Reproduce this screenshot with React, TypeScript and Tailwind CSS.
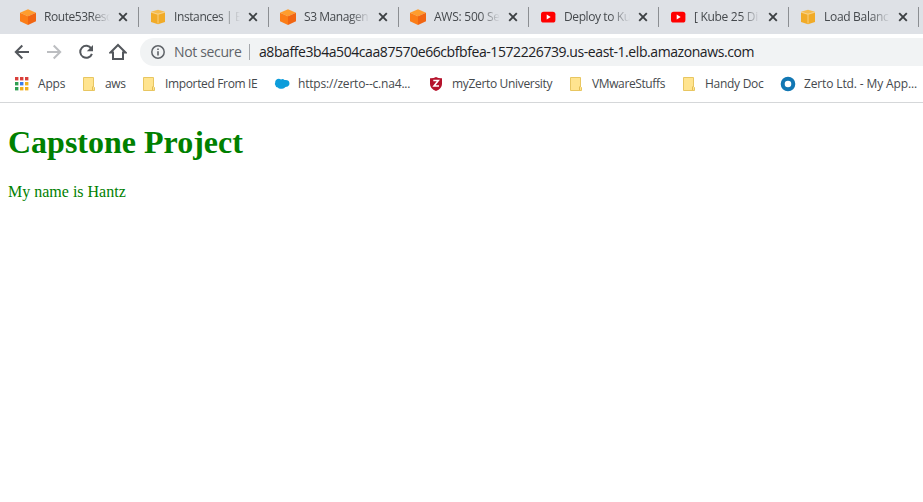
import { type ReactNode } from "react";

function Cube({ light }: { light?: boolean }) {
  return light ? (
    <svg width="16" height="16" viewBox="0 0 16 16" className="shrink-0">
      <path d="M1 3 8 5 15 3V12.900L8 15.200 1 12.900Z" fill="#f1ab28" />
      <path d="M1 2.800 8 .7 15 2.800 8 5Z" fill="#f6bb4c" />
      <path d="M1 3.200 8 5.300 15 3.200M8 5.300V14.500" fill="none" stroke="#fad58b" strokeWidth=".9" />
    </svg>
  ) : (
    <svg width="16" height="16" viewBox="0 0 16 16" className="shrink-0">
      <path d="M8 .3 16 3.700 8 7.200 0 3.700Z" fill="#ff9d2e" />
      <path d="M0 3.700 8 7.200V16L0 12.300Z" fill="#fb7d18" />
      <path d="M16 3.700 8 7.200V16L16 12.300Z" fill="#f16512" />
    </svg>
  );
}

function YouTube() {
  return (
    <svg width="16" height="16" viewBox="0 0 16 16" className="shrink-0">
      <rect x="1" y="2.700" width="14.400" height="10.800" rx="2.600" fill="#f00" />
      <path d="M6.700 5.600v5l4-2.500z" fill="#fff" />
    </svg>
  );
}

function Folder() {
  return (
    <svg width="16" height="16" viewBox="0 0 16 16" className="shrink-0">
      <path d="M2.500 1.500h10v9l1 1v3h-11z" fill="#ffe48f" stroke="#e8c661" />
      <path d="M11.500 14V11l1-1" fill="none" stroke="#e3bd52" />
    </svg>
  );
}

const appColors = ["#d93f3a", "#d93f3a", "#d93f3a", "#2f9e52", "#3b7ded", "#f2b01e", "#2f9e52", "#f2b01e", "#f2b01e"];

function AppsGrid() {
  return (
    <svg width="16" height="16" viewBox="0 0 16 16" className="shrink-0">
      {appColors.map((c, i) => (
        <rect key={i} x={1 + (i % 3) * 5} y={1 + Math.floor(i / 3) * 5} width="3.400" height="3.400" fill={c} />
      ))}
    </svg>
  );
}

function Cloud() {
  return (
    <svg width="16" height="16" viewBox="0 0 16 16" className="shrink-0">
      <path d="M2 4Q4.500 2 7 3.500 9 2.500 10.500 4 13 3.500 14.700 5 16 7 15.200 9 14 11 11.500 11 10 13 7.500 12.700 5 13.200 3.800 11.500 1.800 11.500 1.500 9.500 .3 8 1.200 6.500 1 5 2 4Z" fill="#0d9ddb" />
    </svg>
  );
}

function Shield() {
  return (
    <svg width="16" height="16" viewBox="0 0 16 16" className="shrink-0">
      <path d="M2 2.300Q5.500 2.500 8 1 10.500 2.500 14 2.300V8Q14 12.500 8 15 2 12.500 2 8Z" fill="#b5122b" />
      <path d="M5.300 4.500H10.300L6 10H11" fill="none" stroke="#fff" strokeWidth="1.600" />
    </svg>
  );
}

function Ring() {
  return (
    <svg width="16" height="16" viewBox="0 0 16 16" className="shrink-0">
      <circle cx="8" cy="8" r="5.300" fill="none" stroke="#1277b3" strokeWidth="4" />
    </svg>
  );
}

function Tab({ icon, title, tracking }: { icon: ReactNode; title: string; tracking: string }) {
  return (
    <div className="flex h-[34px] w-[130px] shrink-0 items-center pl-[11px]">
      {icon}
      <span className={"ml-2 w-[66px] whitespace-nowrap text-[12px] leading-[18px] text-[#45494d] [mask-image:linear-gradient(to_right,black_70%,transparent)] " + tracking}>
        {title}
      </span>
      <svg width="10" height="10" viewBox="0 0 10 10" className="ml-2 shrink-0">
        <path d="M1.200 1.200 8.800 8.800M8.800 1.200 1.200 8.800" stroke="#3c4043" strokeWidth="1.900" />
      </svg>
      <div className="ml-auto h-5 w-px bg-[#8b8e92]" />
    </div>
  );
}

function Bookmark({ icon, label, width, tracking }: { icon: ReactNode; label: string; width: string; tracking: string }) {
  return (
    <div className={"flex shrink-0 items-center gap-2 whitespace-nowrap " + width}>
      {icon}
      <span className={tracking}>{label}</span>
    </div>
  );
}

export default function App() {
  return (
    <div className="flex h-[502px] w-[923px] flex-col overflow-hidden bg-white font-['Open_Sans','Noto_Sans',sans-serif]">
      <div className="flex h-[34px] shrink-0 overflow-hidden bg-[#dee1e6] pl-[9px]">
        <Tab icon={<Cube />} title="Route53Reso" tracking="tracking-[-0.45px]" />
        <Tab icon={<Cube light />} title="Instances | E" tracking="tracking-[-0.4px]" />
        <Tab icon={<Cube />} title="S3 Managen" tracking="tracking-[-0.45px]" />
        <Tab icon={<Cube />} title="AWS: 500 Se" tracking="tracking-[-0.25px]" />
        <Tab icon={<YouTube />} title="Deploy to Ku" tracking="tracking-[-0.4px]" />
        <Tab icon={<YouTube />} title="[ Kube 25 Di" tracking="tracking-[-0.3px]" />
        <Tab icon={<Cube light />} title="Load Balanc" tracking="tracking-[-0.3px]" />
      </div>
      <div className="flex h-9 shrink-0 items-center pl-[14px]">
        <svg width="16" height="16" viewBox="0 0 16 16" fill="none" stroke="#54585d" strokeWidth="2">
          <path d="M15 8H2M8.300 1.500 1.800 8l6.500 6.500" />
        </svg>
        <svg width="16" height="16" viewBox="0 0 16 16" fill="none" stroke="#bcbec1" strokeWidth="2" className="ml-4">
          <path d="M1 8h13M7.700 1.500 14.200 8l-6.500 6.500" />
        </svg>
        <svg width="16" height="16" viewBox="0 0 16 16" fill="none" stroke="#54585d" strokeWidth="2" className="ml-4">
          <path d="M13.300 4.600A6 6 0 1 0 13.900 9.800" />
          <path d="M15 1v6.200H8.800Z" fill="#54585d" stroke="none" />
        </svg>
        <svg width="18" height="18" viewBox="0 0 18 18" fill="none" stroke="#54585d" strokeWidth="2" className="ml-[15px]">
          <path d="M1.500 9.500H4V16h10V9.500h2.500L9 2Z" />
        </svg>
        <div className="ml-[13px] flex h-7 flex-1 items-center rounded-l-full bg-[#f1f3f4] pl-[11px] text-[14px] leading-5">
          <svg width="14" height="14" viewBox="0 0 14 14">
            <circle cx="7" cy="7" r="6.200" fill="none" stroke="#5f6368" strokeWidth="1.500" />
            <path d="M7 6.200v4.300M7 3.400v1.600" stroke="#5f6368" strokeWidth="1.600" />
          </svg>
          <span className="ml-[9px] w-[68px] whitespace-nowrap tracking-[-0.35px] text-[#5f6368]">Not secure</span>
          <div className="ml-[7px] h-4 w-px bg-[#a5a8ac]" />
          <span className="ml-[9px] whitespace-nowrap tracking-[-0.425px] text-[#202124]">a8baffe3b4a504caa87570e66cbfbfea-1572226739.us-east-1.elb.amazonaws.com</span>
        </div>
      </div>
      <div className="flex h-[33px] shrink-0 items-center border-b border-[#d5d7d9] pb-[4px] pl-[14px] text-[12px] leading-[18px] text-[#45494d]">
        <Bookmark icon={<AppsGrid />} label="Apps" width="w-[67px]" tracking="tracking-[-0.2px]" />
        <Bookmark icon={<Folder />} label="aws" width="w-[60px]" tracking="tracking-[-0.4px]" />
        <Bookmark icon={<Folder />} label="Imported From IE" width="w-[133px]" tracking="tracking-[-0.35px]" />
        <Bookmark icon={<Cloud />} label="https://zerto--c.na4..." width="w-[154px]" tracking="tracking-[-0.19px]" />
        <Bookmark icon={<Shield />} label="myZerto University" width="w-[140px]" tracking="tracking-[-0.33px]" />
        <Bookmark icon={<Folder />} label="VMwareStuffs" width="w-[113px]" tracking="tracking-[-0.38px]" />
        <Bookmark icon={<Folder />} label="Handy Doc" width="w-[99px]" tracking="tracking-[-0.28px]" />
        <Bookmark icon={<Ring />} label="Zerto Ltd. - My App..." width="w-[140px]" tracking="tracking-[-0.13px]" />
      </div>
      <main className="px-2 pt-[21px] font-['Liberation_Serif',serif] text-[#008000]">
        <h1 className="text-[32px] font-bold leading-[37px]">Capstone Project</h1>
        <p className="mt-[22px] text-base leading-[18px]">My name is Hantz</p>
      </main>
    </div>
  );
}
